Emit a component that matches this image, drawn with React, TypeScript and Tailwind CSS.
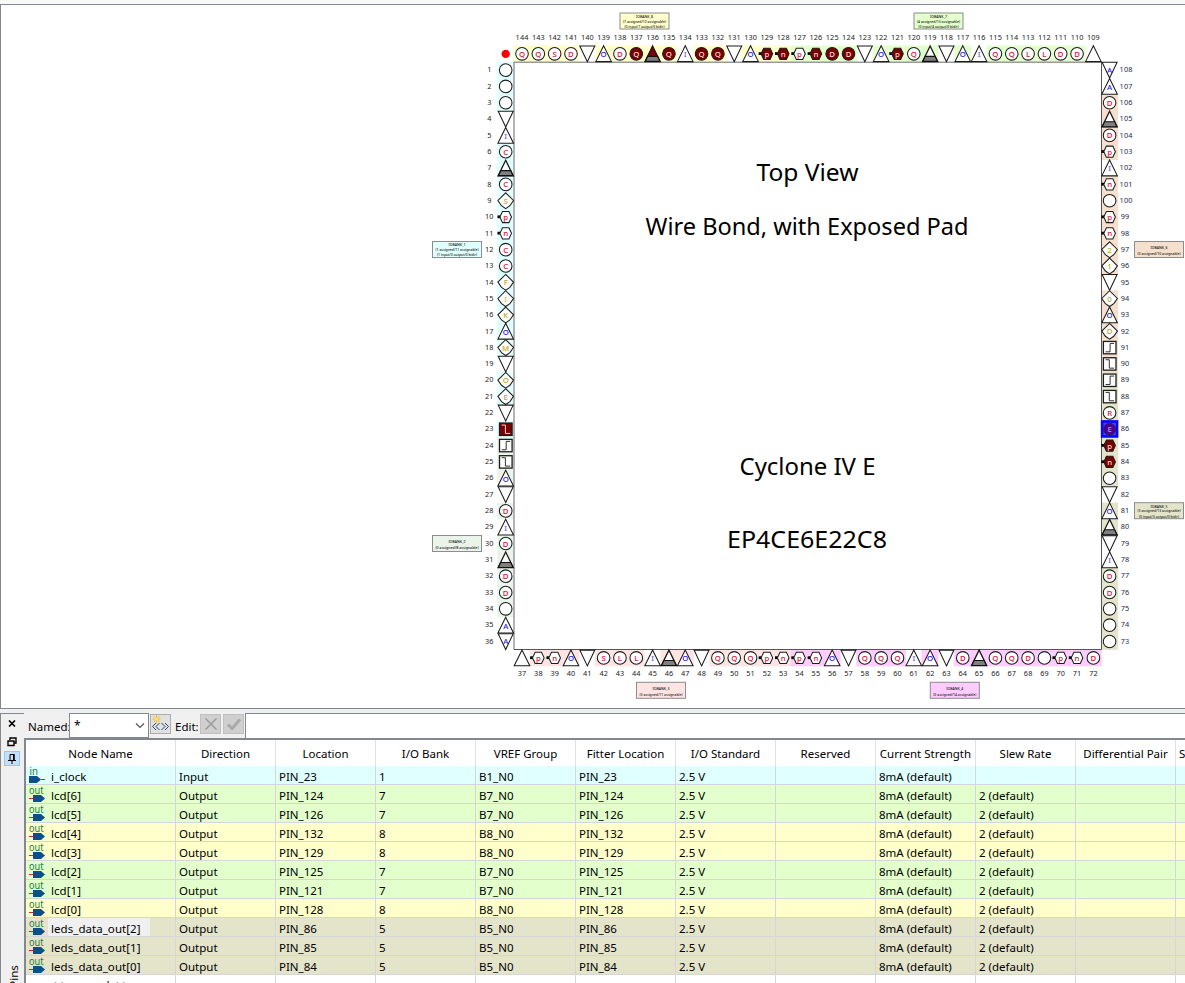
import React from "react";

type Pin = { n: number; code: string; x: number; y: number; side: "l" | "r" | "t" | "b" };

const PITCH = 16.325;
const LEFT = "c c c d uI cC g cC kS hp hn cC cC kF kI kK uO kM d kO kE d f* r f uO d cD uI cD g cD cD c uA dA".split(" ");
const TOP = "cQ cQ cS cD d uO cD cQ* g* cQ* uI cQ* cQ* d uO hp* hn* hp hn* cD* cD* d uO hp* cQ g d uO uI cQ cQ cL cL cD cD u".split(" ");
const RIGHT = "dA uA cD g cD hp uI hn c hp hn k2 k1 d k0 uO kD r f r f cR cE* hp* hn* c d uO g d uI cD cD c c c".split(" ");
const BOTTOM = "u hp hn uO d cS cL cL uI g uO d cQ cQ cQ hp hn hp hn uO d cQ cQ cQ uI uO d cD g cQ cQ cD c hp hn cD".split(" ");

const PINS: Pin[] = [
  ...LEFT.map((code, i): Pin => ({ n: i + 1, code, x: 505.7, y: 70.1 + i * PITCH, side: "l" })),
  ...TOP.map((code, i): Pin => ({ n: 144 - i, code, x: 522 + i * PITCH, y: 53.8, side: "t" })),
  ...RIGHT.map((code, i): Pin => ({ n: 108 - i, code, x: 1109.6, y: 70.1 + i * PITCH, side: "r" })),
  ...BOTTOM.map((code, i): Pin => ({ n: 37 + i, code, x: 522 + i * PITCH, y: 657.9, side: "b" })),
];

function bankColor(n: number): string {
  if (n <= 23) return "#e0ffff";
  if (n <= 36) return "#ebf4eb";
  if (n <= 53) return "#ffe4e4";
  if (n <= 72) return "#ffccff";
  if (n <= 89) return "#e4e4cb";
  if (n <= 108) return "#f6dfcc";
  if (n <= 127) return "#e2ffcc";
  return "#ffffcc";
}

function hasBank(code: string) {
  return !(code[0] === "d" || code === "u" || code === "uI" || code === "uA");
}

function letterColor(shape: string, letter: string, filled: boolean) {
  if (filled) return "#ffd6d6";
  if (shape === "k") return letter === "I" ? "#f0b040" : letter === "0" ? "#9bb04a" : "#c2a820";
  if (shape === "u" || shape === "d") return letter === "I" ? "#6a5cf0" : "#2a20f0";
  return "#d4143c";
}

function PinMark({ pin }: { pin: Pin }) {
  const { x, y, code } = pin;
  const shape = code[0];
  const filled = code.endsWith("*");
  const letter = code.slice(1).replace("*", "");
  const selected = code === "cE*";
  const fill = filled ? "#7a0000" : "#fff";
  const st = { fill, stroke: "#1c1c1c", strokeWidth: 1.05 };
  return (
    <g>
      {shape === "c" && <circle cx={x} cy={y} r={6.3} {...st} />}
      {shape === "u" && <polygon points={`${x},${y - 8} ${x + 7.8},${y + 7.8} ${x - 7.8},${y + 7.8}`} {...st} />}
      {shape === "d" && <polygon points={`${x},${y + 8} ${x + 7.5},${y - 7.8} ${x - 7.5},${y - 7.8}`} {...st} />}
      {shape === "g" && (
        <>
          <polygon points={`${x},${y - 7.8} ${x + 7.6},${y + 7.8} ${x - 7.6},${y + 7.8}`} {...st} strokeWidth={1.3} />
          <polygon points={`${x - 5},${y + 2.6} ${x + 5},${y + 2.6} ${x + 7.3},${y + 7.6} ${x - 7.3},${y + 7.6}`} fill="#808080" stroke="#111" strokeWidth={1.1} />
        </>
      )}
      {shape === "h" && (
        <>
          <rect x={x - 8.2} y={y - 1.6} width={3.5} height={2.8} fill="#000" />
          <polygon points={`${x - 5.8},${y} ${x - 3.2},${y - 5.6} ${x + 3.2},${y - 5.6} ${x + 5.8},${y} ${x + 3.2},${y + 5.6} ${x - 3.2},${y + 5.6}`} {...st} />
        </>
      )}
      {shape === "k" && (
        <polygon points={`${x},${y - 7.9} ${x + 7.8},${y - 0.2} ${x + 4.2},${y + 5} ${x},${y + 7.9} ${x - 4.2},${y + 5} ${x - 7.8},${y - 0.2}`} {...st} />
      )}
      {(shape === "r" || shape === "f") && (
        <>
          <rect x={x - 6.2} y={y - 6.2} width={12.6} height={12.4} {...st} strokeWidth={1.3} />
          <path
            d={shape === "r" ? `M${x - 4} ${y + 4.2}H${x + 0.5}V${y - 4.2}H${x + 4.5}` : `M${x - 4} ${y - 4.2}H${x - 0.3}V${y + 4.2}H${x + 4.5}`}
            fill="none"
            stroke={filled ? "#ffd6d6" : "#333"}
            strokeWidth={1}
          />
        </>
      )}
      {selected && (
        <>
          <rect x={x - 7.5} y={y - 7.8} width={15} height={15} fill="#4444f0" stroke="#0808f0" strokeWidth={2.6} />
          <circle cx={x} cy={y} r={6} fill="#4a0088" stroke="#2a1a8c" />
        </>
      )}
      {letter && (
        <text x={x} y={y + (shape === "u" ? 3.4 : 3)} fontSize={7.8} fontWeight={500} textAnchor="middle" fill={selected ? "#b08cf0" : letterColor(shape, letter, filled)}>
          {letter}
        </text>
      )}
    </g>
  );
}

function PinNumber({ pin }: { pin: Pin }) {
  const wide = pin.n > 99;
  let x = pin.x;
  let y = pin.y + 2.2;
  if (pin.side === "l") x = 489.3;
  if (pin.side === "r") x = wide ? 1126 : 1125;
  if (pin.side === "t") y = 40;
  if (pin.side === "b") y = 676.2;
  return (
    <text x={x} y={y} fontSize={7.3} textAnchor="middle" fill={pin.side === "r" ? "#1d2b45" : "#222"} textLength={wide ? 12.8 : pin.n > 9 ? 8.5 : 4}>
      {pin.n}
    </text>
  );
}

const BANKS = [
  { x: 620, y: 13, c: "#ffffcc", t: ["IOBANK_8", "(7 assigned/12 assignable)", "(0 input/7 output/0 bidir)"] },
  { x: 914, y: 13, c: "#e2ffcc", t: ["IOBANK_7", "(4 assigned/13 assignable)", "(0 input/4 output/0 bidir)"] },
  { x: 432.5, y: 241.5, c: "#e0ffff", t: ["IOBANK_1", "(1 assigned/11 assignable)", "(1 input/0 output/0 bidir)"] },
  { x: 432.5, y: 535.5, c: "#ebf4eb", t: ["IOBANK_2", "(0 assigned/8 assignable)"] },
  { x: 1134.5, y: 241.5, c: "#f6dfcc", t: ["IOBANK_6", "(0 assigned/10 assignable)"] },
  { x: 1134.5, y: 502.7, c: "#e4e4cb", t: ["IOBANK_5", "(3 assigned/13 assignable)", "(0 input/3 output/0 bidir)"] },
  { x: 636.5, y: 682.3, c: "#ffe4e4", t: ["IOBANK_3", "(0 assigned/11 assignable)"] },
  { x: 930.3, y: 682.3, c: "#ffccff", t: ["IOBANK_4", "(0 assigned/14 assignable)"] },
];

const TITLES: [string, number, number, number][] = [
  ["Top View", 807.5, 181, 102],
  ["Wire Bond, with Exposed Pad", 807, 235, 323],
  ["Cyclone IV E", 807.5, 475, 136],
  ["EP4CE6E22C8", 807, 548, 160],
];

function PackageView() {
  return (
    <svg className="block" width={1184} height={703} viewBox="1 5 1184 703">
      {PINS.filter((p) => hasBank(p.code)).map((p) => (
        <rect key={p.n} x={p.x - 8.6} y={p.y - 8.3} width={17} height={16.7} fill={bankColor(p.n)} />
      ))}
      <rect x={514} y={62} width={587.5} height={587.5} fill="#fff" />
      <path d="M514 649.5V62.3H1101" fill="none" stroke="#9a9a9a" strokeWidth={1.5} />
      <path d="M1101.5 62V649.5H514" fill="none" stroke="#555" strokeWidth={1} />
      <circle cx={505.7} cy={53.9} r={4.2} fill="#f00" />
      {PINS.map((p) => (
        <PinMark key={p.n} pin={p} />
      ))}
      {PINS.map((p) => (
        <PinNumber key={p.n} pin={p} />
      ))}
      {BANKS.map((b) => (
        <g key={b.t[0]}>
          <rect x={b.x} y={b.y} width={49} height={16} fill={b.c} stroke="#8c8c8c" />
          {b.t.map((line, i) => (
            <text
              key={i}
              x={b.x + 24.5}
              y={b.y + (b.t.length === 3 ? [4.8, 9.6, 14.8][i] : [7.8, 13.8][i])}
              fontSize={4.2}
              fontWeight={500}
              textAnchor="middle"
              textLength={i === 0 ? 17 : i === 1 ? 43 : 40}
              lengthAdjust="spacingAndGlyphs"
              fill="#111"
            >
              {line}
            </text>
          ))}
        </g>
      ))}
      {TITLES.map(([t, x, y, w]) => (
        <text key={t} x={x} y={y} fontSize={23.5} textAnchor="middle" textLength={w} lengthAdjust="spacingAndGlyphs" fill="#000">
          {t}
        </text>
      ))}
    </svg>
  );
}

const HEADERS = ["Node Name", "Direction", "Location", "I/O Bank", "VREF Group", "Fitter Location", "I/O Standard", "Reserved", "Current Strength", "Slew Rate", "Differential Pair"];

const ROWS: [string, string, string][] = [
  ["i_clock", "23", "1"],
  ["lcd[6]", "124", "7"],
  ["lcd[5]", "126", "7"],
  ["lcd[4]", "132", "8"],
  ["lcd[3]", "129", "8"],
  ["lcd[2]", "125", "7"],
  ["lcd[1]", "121", "7"],
  ["lcd[0]", "128", "8"],
  ["leds_data_out[2]", "86", "5"],
  ["leds_data_out[1]", "85", "5"],
  ["leds_data_out[0]", "84", "5"],
];

const ROW_BG: Record<string, string> = {
  "1": "bg-[#e0ffff]",
  "7": "bg-[#e2ffcc]",
  "8": "bg-[#ffffcc]",
  "5": "bg-[#e4e4cb]",
};

const GRID = "grid grid-cols-[150px_repeat(11,100px)] w-[1250px]";

function NodeIcon({ input }: { input: boolean }) {
  return (
    <svg className="shrink-0" width={17} height={18} viewBox="0 0 17 18">
      <text x={input ? 0.5 : 0} y={9} fontSize={10} textLength={input ? 8.5 : 14.5} lengthAdjust="spacingAndGlyphs" fill="#1d7a3c">
        {input ? "in" : "out"}
      </text>
      {input ? (
        <>
          <path d="M0 10h8l4 3.5-4 3.5H0z" fill="#0b4f8c" />
          <path d="M12 13.5h4" stroke="#e81c24" />
        </>
      ) : (
        <>
          <path d="M4 10h8l4 3.5-4 3.5H4z" fill="#0b4f8c" />
          <path d="M0 13.5h4" stroke="#e81c24" />
        </>
      )}
    </svg>
  );
}

function Toolbar() {
  return (
    <div className="flex h-[25px] shrink-0 items-start bg-[#f0f0f0]">
      <span className="w-[45px] shrink-0 pl-[4px] pt-[5px] text-[11.5px] leading-[18px] whitespace-nowrap">Named:</span>
      <div className="flex h-[25px] w-[80px] shrink-0 items-center justify-between border border-[#828790] bg-white pl-1 pr-[3px]">
        <span className="text-[12px]">*</span>
        <svg width={10} height={8} viewBox="0 0 10 8">
          <path d="M1 1.5l4 4 4-4" fill="none" stroke="#555" strokeWidth={1.2} />
        </svg>
      </div>
      <div className="ml-px mt-px flex h-5 w-[21px] shrink-0 items-center justify-center border border-[#adadad] bg-[#e1e1e1]">
        <svg width={19} height={18} viewBox="0 0 19 18">
          <path d="M5.5 0v8M1.5 4h8M2.5 1l6 6M8.5 1l-6 6" stroke="#f5b91e" strokeWidth={1} />
          <circle cx={5.5} cy={4} r={1.8} fill="#ffe36b" />
          <path d="M5 8l-3.500 3.500 3.500 3.500M8.500 8l-3.500 3.500 3.500 3.500M10.500 8l3.500 3.500-3.500 3.500M14 8l3.500 3.500-3.500 3.500" fill="none" stroke="#2a4a72" strokeWidth={1} />
        </svg>
      </div>
      <span className="w-[29px] shrink-0 pl-1 pt-[5px] text-[11.5px] leading-[18px] whitespace-nowrap">Edit:</span>
      <div className="mt-px flex h-5 w-[21px] shrink-0 items-center justify-center border border-[#c0c0c0] bg-[#cfcfcf]">
        <svg width={14} height={14} viewBox="0 0 14 14">
          <path d="M1.5 1.5l11 11M12.5 1.5l-11 11" stroke="#9b9b9b" strokeWidth={1.5} />
        </svg>
      </div>
      <div className="ml-[2px] mt-px flex h-5 w-[21px] shrink-0 items-center justify-center border border-[#c0c0c0] bg-[#cfcfcf]">
        <svg width={16} height={14} viewBox="0 0 16 14">
          <path d="M2 7.5l4 4 8-9" fill="none" stroke="#aaa" strokeWidth={3} />
        </svg>
      </div>
      <div className="ml-px h-[25px] flex-1 border-l border-t border-[#828790] bg-white" />
    </div>
  );
}

function Cell({ children }: { children?: React.ReactNode }) {
  return <div className="h-[19px] border-r border-b border-[#d5d5dc] pl-[3px] pt-[2px] whitespace-nowrap">{children}</div>;
}

function PinTable() {
  return (
    <div className="min-h-0 flex-1 overflow-hidden border-l-2 border-t-2 border-[#828790] bg-white text-[11.5px] leading-[17px]">
      <div className={GRID}>
        {HEADERS.map((h) => (
          <div key={h} className="h-[26px] border-r border-[#e2e2e2] pt-[5px] text-center whitespace-nowrap">
            {h}
          </div>
        ))}
        <div className="h-[26px] overflow-hidden pl-[3px] pt-[5px] whitespace-nowrap">Strict Preservation</div>
      </div>
      {ROWS.map(([name, pin, bank], i) => (
        <div key={name} className={`${GRID} ${ROW_BG[bank]}`}>
          <div className="flex h-[19px] border-r border-b border-[#d5d5dc] pl-[3px]">
            <NodeIcon input={i === 0} />
            <span className={`ml-[2px] h-[18px] pl-[3px] pt-[2px] tracking-[0.05px] whitespace-nowrap ${i === 8 ? "w-[102px] bg-[#f0f0f0]" : ""}`}>{name}</span>
          </div>
          <Cell>{i === 0 ? "Input" : "Output"}</Cell>
          <Cell>PIN_{pin}</Cell>
          <Cell>{bank}</Cell>
          <Cell>B{bank}_N0</Cell>
          <Cell>PIN_{pin}</Cell>
          <Cell>2.5 V</Cell>
          <Cell />
          <Cell>8mA (default)</Cell>
          <Cell>{i === 0 ? "" : "2 (default)"}</Cell>
          <Cell />
          <Cell />
        </div>
      ))}
      <div className={GRID}>
        <div className="h-[19px] border-r border-[#d5d5dc] pl-[24px] pt-px">&lt;&lt;new node&gt;&gt;</div>
        {HEADERS.slice(1).map((h) => (
          <div key={h} className="border-r border-[#d5d5dc]" />
        ))}
      </div>
    </div>
  );
}

function DockStrip() {
  return (
    <div className="flex w-[24px] shrink-0 flex-col items-center border-l border-t border-[#828790] bg-[#f0f0f0] pr-px">
      <svg className="mt-[6px]" width={8} height={7} viewBox="0 0 8 7">
        <path d="M1 .5l6 6M7 .5l-6 6" stroke="#000" strokeWidth={1.6} />
      </svg>
      <svg className="mt-[10px]" width={10} height={10} viewBox="0 0 10 10">
        <path d="M3 3V1h6v5H7M1 4h6v4.5H1z" fill="none" stroke="#000" strokeWidth={1.4} />
      </svg>
      <div className="mt-[4px] flex h-[15px] w-4 items-center justify-center border border-[#90c8f6] bg-[#c4e0f8]">
        <svg width={10} height={11} viewBox="0 0 10 11">
          <path d="M3 7V1.5h4V7M1 7.5h8M5 7.5V11" fill="none" stroke="#000" />
          <path d="M6.8 1v6" stroke="#000" strokeWidth={1.5} />
        </svg>
      </div>
      <div className="mt-auto flex h-[18px] items-start overflow-hidden pl-[3px]">
        <span className="h-[42px] rotate-180 text-right text-[11.5px] leading-[14px] whitespace-nowrap [writing-mode:vertical-rl]">All Pins</span>
      </div>
    </div>
  );
}

export default function App() {
  return (
    <div className="flex h-[983px] w-[1185px] flex-col overflow-hidden bg-[#f0f0f0] text-black [font-family:'Noto_Sans','Open_Sans',sans-serif]">
      <div className="h-1 shrink-0 bg-[#f9f9f8]" />
      <div className="h-[705px] shrink-0 border-t border-b border-l border-[#828790] bg-white">
        <PackageView />
      </div>
      <div className="h-1 shrink-0 bg-[#f0f0f0]" />
      <div className="flex min-h-0 flex-1">
        <DockStrip />
        <div className="flex min-w-0 flex-1 flex-col">
          <Toolbar />
          <PinTable />
        </div>
      </div>
    </div>
  );
}
